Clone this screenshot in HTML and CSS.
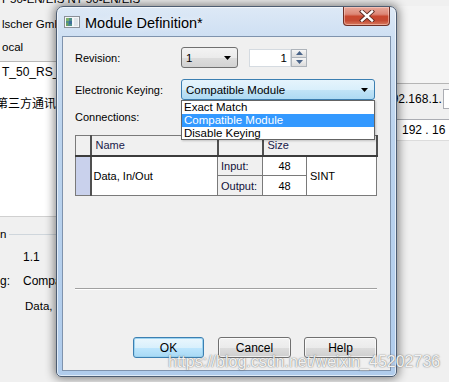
FILE: index.html
```html
<!DOCTYPE html>
<html>
<head>
<meta charset="utf-8">
<link rel="stylesheet" href="styles.css">
</head>
<body>
<div class="desktop">
  <div class="bg">
    <div class="bg-top">T 50-EN/EIS NT 50-EN/EIS</div>
    <div class="bg-cols">
      <div class="bg-left">
        <div class="bl-row">lscher GmbH</div>
        <div class="bl-row">ocal</div>
        <div class="bl-white">
          <div class="bl-field">T_50_RS_E</div>
          <div class="bl-cjk">第三方通讯模</div>
        </div>
        <div class="bl-group"><span>n</span><i></i></div>
        <div class="bl-val">1.1</div>
        <div class="bl-pair"><span class="bl-lab">g:</span><span>Compa</span></div>
        <div class="bl-val2">Data, I</div>
      </div>
      <div class="bg-right">
        <div class="br-top"></div>
        <div class="br-row"><span class="br-text">192.168.1.</span><span class="br-box"></span></div>
        <div class="br-field">192 . 16</div>
      </div>
    </div>
  </div>

  <div class="dialog">
    <div class="titlebar">
      <svg class="ticon" width="16" height="12" viewBox="0 0 16 12">
        <rect x="0.5" y="0.5" width="15" height="11" fill="#f4f6f8" stroke="#8a9098"/>
        <rect x="2" y="2" width="6" height="8" fill="#4f8f8a"/>
        <rect x="2" y="2" width="3" height="3" fill="#7fb06a"/>
        <rect x="5" y="5" width="3" height="3" fill="#3f6f9a"/>
        <rect x="2" y="7" width="2" height="3" fill="#6ea05c"/>
        <rect x="10" y="2" width="4" height="8" fill="#dfe5ea"/>
      </svg>
      <span class="ttitle">Module Definition*</span>
      <div class="closebtn">
        <svg width="16" height="12" viewBox="0 0 16 12">
          <path d="M3 1.5 L13 10.5 M13 1.5 L3 10.5" stroke="#5a2a22" stroke-width="4.2" stroke-linecap="square"/>
          <path d="M3 1.5 L13 10.5 M13 1.5 L3 10.5" stroke="#ffffff" stroke-width="2.4" stroke-linecap="square"/>
        </svg>
      </div>
    </div>
    <div class="client">
      <div class="frow r1">
        <span class="lab">Revision:</span>
        <div class="combo small"><span>1</span>
          <svg class="arr" width="7" height="4" viewBox="0 0 7 4"><path d="M0 0 H7 L3.5 4 Z" fill="#000"/></svg>
        </div>
        <div class="spin">
          <div class="spin-text">1</div>
          <div class="spin-btns">
            <div class="sb"><svg width="7" height="4" viewBox="0 0 7 4"><path d="M0 4 H7 L3.5 0 Z" fill="#4a6489"/></svg></div>
            <div class="sb"><svg width="7" height="4" viewBox="0 0 7 4"><path d="M0 0 H7 L3.5 4 Z" fill="#4a6489"/></svg></div>
          </div>
        </div>
      </div>
      <div class="frow r2">
        <span class="lab">Electronic Keying:</span>
        <div class="combo wide open"><span>Compatible Module</span>
          <svg class="arr" width="7" height="4" viewBox="0 0 7 4"><path d="M0 0 H7 L3.5 4 Z" fill="#000"/></svg>
        </div>
      </div>
      <div class="frow r3"><span class="lab">Connections:</span></div>

      <table class="grid">
        <colgroup>
          <col class="w-rh"><col class="w-name"><col class="w-io"><col class="w-num"><col class="w-type">
        </colgroup>
        <thead>
          <tr>
            <th class="c-rh"></th>
            <th class="c-name">Name</th>
            <th class="c-io"></th>
            <th class="c-size" colspan="2">Size</th>
          </tr>
        </thead>
        <tbody>
          <tr>
            <td class="c-rh sel" rowspan="2"></td>
            <td class="c-name" rowspan="2">Data, In/Out</td>
            <td class="c-io">Input:</td>
            <td class="c-num">48</td>
            <td class="c-type" rowspan="2">SINT</td>
          </tr>
          <tr>
            <td class="c-io">Output:</td>
            <td class="c-num">48</td>
          </tr>
        </tbody>
      </table>

      <div class="sep"></div>

      <div class="buttons">
        <div class="btn ok">OK</div>
        <div class="btn cancel">Cancel</div>
        <div class="btn help">Help</div>
      </div>

      <div class="droplist">
        <div class="item">Exact Match</div>
        <div class="item hl">Compatible Module</div>
        <div class="item">Disable Keying</div>
      </div>
    </div>
  </div>

  <div class="watermark">https://blog.csdn.net/weixin_45202736</div>
</div>
</body>
</html>
```

FILE: styles.css
```css
* { box-sizing: border-box; }
html, body { margin: 0; padding: 0; }
body {
  width: 449px;
  height: 382px;
  overflow: hidden;
  background: #f0f0f0;
  font-family: "Liberation Sans", Arial, sans-serif;
  font-size: 11px;
  color: #000;
}
.desktop {
  position: relative;
  width: 449px;
  height: 382px;
  overflow: hidden;
  background: #f0f0f0;
}

/* background application */
.bg { display: flex; flex-direction: column; height: 100%; }
.bg-top {
  font-size: 11.5px;
  line-height: 14px;
  margin-top: -8px;
  white-space: nowrap;
}
.bg-cols { display: flex; justify-content: space-between; flex: 1; }
.bg-left { width: 62px; display: flex; flex-direction: column; padding-top: 7px; font-size: 11.5px; white-space: nowrap; }
.bl-row { line-height: 23px; height: 23px; padding-left: 2px; }
.bl-white {
  margin-top: 2px;
  height: 156px;
  background: #fff;
  border-top: 1px solid #b9b9b9;
  border-bottom: 1px solid #d0d0d0;
  padding-top: 3px;
}
.bl-field { line-height: 14px; padding-left: 2px; font-size: 12px; }
.bl-cjk {
  margin-top: 16px;
  margin-left: -4px;
  line-height: 16px;
  font-family: "Noto Sans CJK SC", sans-serif;
  font-size: 12px;
}
.bl-group { display: flex; align-items: center; margin-top: 11px; height: 12px; }
.bl-group span { line-height: 12px; }
.bl-group i { flex: 1; border-top: 1px solid #cfd6dc; margin-left: 3px; }
.bl-val { margin-top: 10px; padding-left: 23px; line-height: 14px; font-size: 12px; }
.bl-pair { margin-top: 10px; display: flex; line-height: 14px; font-size: 12px; }
.bl-lab { width: 23px; }
.bl-val2 { margin-top: 11px; padding-left: 25px; line-height: 14px; }

.bg-right { width: 52px; display: flex; flex-direction: column; font-size: 12px; white-space: nowrap; }
.br-top { height: 78px; border-bottom: 1px solid #b5b5b5; background: #f4f4f4; }
.br-row { display: flex; align-items: center; height: 21px; margin-top: 4px; }
.br-text { margin-left: -12px; width: 58px; }
.br-box { flex: 1; height: 20px; background: #fff; border: 1px solid #abadb3; border-right: none; }
.br-field {
  margin-top: 10px;
  height: 22px;
  line-height: 20px;
  background: #fff;
  border-top: 1px solid #abadb3;
  border-bottom: 1px solid #dcdcdc;
  padding-left: 5px;
}

/* dialog window */
.dialog {
  position: absolute;
  left: 56px;
  top: 6px;
  width: 341px;
  height: 371px;
  border: 1px solid #4d5d72;
  border-radius: 7px 7px 5px 5px;
  background: linear-gradient(180deg, #dde9f6 0px, #cfe0f3 28px, #bcd4ee 120px, #b0ccec 100%);
  box-shadow: 0 0 10px 2px rgba(0, 0, 0, 0.45), inset 0 0 0 1px rgba(255, 255, 255, 0.6);
  padding: 0 5px 5px 5px;
  display: flex;
  flex-direction: column;
}
.titlebar {
  height: 29px;
  display: flex;
  align-items: center;
}
.ticon { margin-left: 2px; flex: none; }
.ttitle {
  margin-left: 5px;
  font-size: 14.5px;
  color: #000;
  text-shadow: 0 0 6px rgba(255, 255, 255, 0.9);
  padding-top: 2px;
}
.closebtn {
  margin-left: auto;
  margin-right: 1px;
  align-self: flex-start;
  width: 47px;
  height: 19px;
  border: 1px solid #6e2f26;
  border-top: none;
  border-radius: 0 0 4px 4px;
  background: linear-gradient(180deg, #e9a99b 0%, #dc8676 40%, #c9472f 52%, #c54a33 75%, #d77a5e 100%);
  box-shadow: inset 0 0 0 1px rgba(255, 220, 210, 0.5);
  display: flex;
  align-items: center;
  justify-content: center;
}

.client {
  position: relative;
  flex: 1;
  background: #f0f0f0;
  border: 1px solid #7f93ad;
  padding: 10px 13px 12px 12px;
  display: flex;
  flex-direction: column;
}
.frow { display: flex; align-items: center; }
.r1 { height: 21px; }
.r2 { height: 21px; margin-top: 11px; }
.r3 { height: 14px; margin-top: 10px; }
.lab { width: 106px; flex: none; }

.combo {
  height: 21px;
  border: 1px solid #707070;
  border-radius: 3px;
  background: linear-gradient(180deg, #f3f3f3 0%, #ebebeb 50%, #dddddd 51%, #d2d2d2 100%);
  display: flex;
  align-items: center;
  padding: 0 0 0 4px;
  font-size: 11.5px;
}
.combo span { flex: 1; }
.combo .arr { margin-right: 6px; }
.combo.small { width: 57px; }
.combo.wide { width: 194px; }
.combo.open {
  border-color: #3c7fb1;
  background: linear-gradient(180deg, #e5f4fc 0%, #d9effb 50%, #c2e4f7 51%, #addaf3 100%);
}

.spin { display: flex; margin-left: 11px; height: 18px; align-self: center; }
.spin-text {
  width: 42px;
  height: 18px;
  background: #fff;
  border: 1px solid #d5dbe1;
  text-align: right;
  padding-right: 3px;
  line-height: 16px;
  font-size: 11.5px;
}
.spin-btns { width: 16px; display: flex; flex-direction: column; }
.sb {
  flex: 1;
  border: 1px solid #aeb4bb;
  background: linear-gradient(180deg, #f6f6f6, #dcdcdc);
  display: flex;
  align-items: center;
  justify-content: center;
}
.sb + .sb { border-top: none; }

/* table */
.grid {
  margin-top: 11px;
  width: 302px;
  border-collapse: collapse;
  border: 1px solid #5a5a5a;
  table-layout: fixed;
  font-size: 11px;
}
.w-rh { width: 15px; }
.w-name { width: 127px; }
.w-io { width: 45px; }
.w-num { width: 44px; }
.w-type { width: 70px; }
.grid th, .grid td { padding: 0; border: 1px solid #7a7a7a; }
.grid thead th {
  height: 20px;
  background: #f0f0f0;
  border-bottom: 2px solid #3c3c3c;
  border-right: 2px solid #505050;
  font-weight: normal;
  text-align: left;
  color: #1a1a4a;
  padding-left: 4px;
}
.grid th.c-rh { padding: 0; }
.grid td { background: #fff; height: 20px; }
.grid td.sel { background: #c9d1ec; border-right: 2px solid #505050; }
.grid td.c-name { padding-left: 2px; }
.grid td.c-io { padding-left: 3px; background: #f0f0f0; color: #10103a; }
.grid td.c-num { text-align: center; }
.grid td.c-type { padding-left: 3px; }

.sep {
  margin-top: 92px;
  width: 302px;
  border-top: 1px solid #a0a0a0;
  border-bottom: 1px solid #ffffff;
}

.buttons { margin-top: auto; display: flex; justify-content: flex-end; }
.btn {
  height: 21px;
  border: 1px solid #707070;
  border-radius: 3px;
  background: linear-gradient(180deg, #f2f2f2 0%, #ebebeb 50%, #dddddd 51%, #cfcfcf 100%);
  box-shadow: inset 0 0 0 1px rgba(255, 255, 255, 0.7);
  display: flex;
  align-items: center;
  justify-content: center;
  font-size: 12px;
}
.btn.ok {
  width: 71px;
  border-color: #3c7fb1;
  background: linear-gradient(180deg, #eaf6fd 0%, #d9f0fc 50%, #bee6fd 51%, #a7d9f5 100%);
  box-shadow: inset 0 0 0 1px #9cd3f0;
}
.btn.cancel { width: 73px; margin-left: 14px; }
.btn.help { width: 73px; margin-left: 13px; }

.droplist {
  position: absolute;
  left: 118px;
  top: 63px;
  width: 194px;
  height: 40px;
  background: #fff;
  border: 1px solid #646464;
  box-shadow: 1px 1px 2px rgba(0, 0, 0, 0.2);
  font-size: 11.5px;
}
.item { height: 13px; line-height: 13px; padding-left: 2px; }
.item.hl { background: #3399ff; color: #fff; }

.watermark {
  position: absolute;
  left: 168px;
  top: 353px;
  font-size: 16px;
  line-height: 18px;
  white-space: nowrap;
  color: rgba(255, 255, 255, 0.92);
  text-shadow: 0 0 1px rgba(90, 90, 90, 0.9), 0 0 2px rgba(120, 120, 120, 0.5);
}
```
